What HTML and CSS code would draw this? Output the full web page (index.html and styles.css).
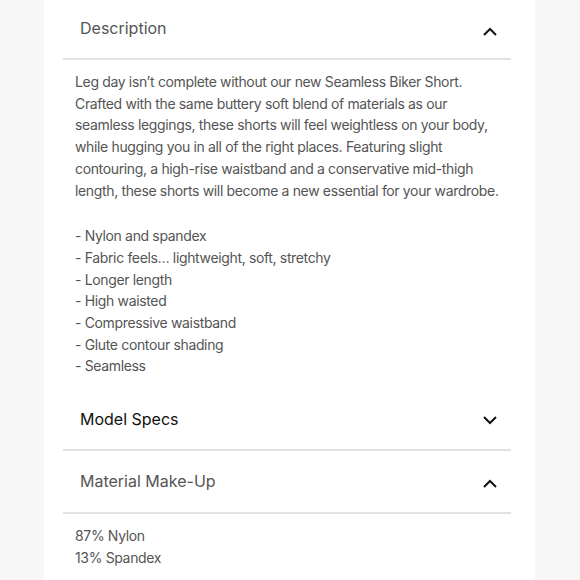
FILE: index.html
```html
<!DOCTYPE html>
<html>
<head>
  <title>Product Details</title>
  <link rel="stylesheet" href="styles.css">
</head>
<body>
  <div class="panel">
    <div class="accordion">
      <div class="acc-head">
        <span class="acc-title">Description</span>
        <svg class="chev" width="16" height="10" viewBox="0 0 16 10"><path d="M2 8 L8 2 L14 8" fill="none" stroke="#111" stroke-width="2"/></svg>
      </div>
      <div class="acc-body">
        <p class="desc">Leg day isn’t complete without our new Seamless Biker Short. Crafted with the same buttery soft blend of materials as our seamless leggings, these shorts will feel weightless on your body, while hugging you in all of the right places. Featuring slight contouring, a high-rise waistband and a conservative mid-thigh length, these shorts will become a new essential for your wardrobe.</p>
        <ul class="features">
          <li>- Nylon and spandex</li>
          <li>- Fabric feels… lightweight, soft, stretchy</li>
          <li>- Longer length</li>
          <li>- High waisted</li>
          <li>- Compressive waistband</li>
          <li>- Glute contour shading</li>
          <li>- Seamless</li>
        </ul>
      </div>
    </div>
    <div class="accordion">
      <div class="acc-head">
        <span class="acc-title dark">Model Specs</span>
        <svg class="chev down" width="16" height="10" viewBox="0 0 16 10"><path d="M2 2 L8 8 L14 2" fill="none" stroke="#111" stroke-width="2"/></svg>
      </div>
    </div>
    <div class="accordion">
      <div class="acc-head tall">
        <span class="acc-title">Material Make-Up</span>
        <svg class="chev" width="16" height="10" viewBox="0 0 16 10"><path d="M2 8 L8 2 L14 8" fill="none" stroke="#111" stroke-width="2"/></svg>
      </div>
      <div class="acc-body">
        <p class="materials">87% Nylon<br>13% Spandex</p>
      </div>
    </div>
  </div>
</body>
</html>
```

FILE: styles.css
```css
body {
  margin: 0;
  background-color: #f7f7f7;
  font-family: Inter, "Noto Sans", sans-serif;
}
.panel {
  width: 491px;
  margin-left: 44px;
  background-color: white;
  min-height: 580px;
  padding: 0 24px 0 19px;
  box-sizing: border-box;
}
.acc-head {
  display: flex;
  align-items: center;
  justify-content: space-between;
  height: 58px;
  padding: 0 13px 0 17px;
  border-bottom: 2px solid #e2e2e2;
}
.acc-head.tall {
  height: 61px;
}
.acc-title {
  font-size: 16px;
  color: #555;
  margin-top: -2px;
}
.acc-title.dark {
  color: #111;
}
.chev {
  margin-top: 5px;
}
.chev.down {
  margin-top: 0;
}
.acc-body {
  padding: 11px 8px 14px 12px;
  font-size: 14px;
  letter-spacing: -0.35px;
  line-height: 21.7px;
  color: #555;
}
.desc {
  margin: 0 0 24px 0;
}
.features {
  list-style: none;
  margin: 0;
  padding: 0;
}
.materials {
  margin: 0;
}
```
